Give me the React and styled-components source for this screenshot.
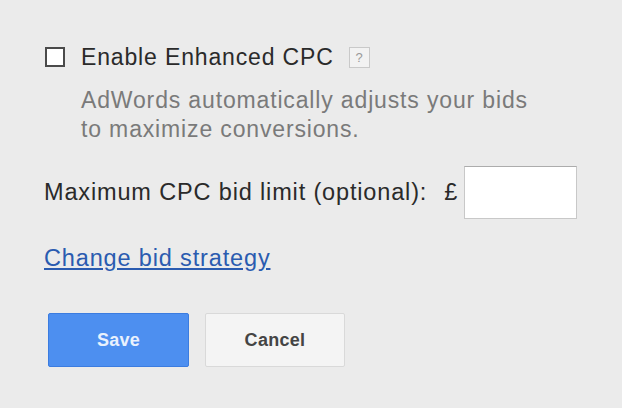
import React from "react";
import styled, { createGlobalStyle } from "styled-components";

const Global = createGlobalStyle`
  html, body { margin: 0; padding: 0; background: #ebebeb; }
  body { font-family: "Liberation Sans", Arial, sans-serif; }
`;

const Panel = styled.div`
  width: 622px;
  height: 408px;
  box-sizing: border-box;
  padding: 44px 0 0 44px;
  background: #ebebeb;
  display: flex;
  flex-direction: column;
  color: #2a2a2a;
  letter-spacing: 0.85px;
`;

const CheckRow = styled.label`
  display: flex;
  align-items: center;
  height: 26px;
`;

const Box = styled.span`
  width: 16px;
  height: 16px;
  border: 2px solid #4a4a4a;
  background: #fff;
  margin-left: 1px;
  margin-right: 16px;
  flex: none;
`;

const Label = styled.span`
  font-size: 23px;
  color: #2a2a2a;
`;

const Help = styled.span`
  margin-left: 15px;
  width: 19px;
  height: 19px;
  border: 1px solid #c9c9c9;
  background: #f2f2f2;
  color: #999;
  font-size: 13px;
  display: flex;
  align-items: center;
  justify-content: center;
  letter-spacing: 0;
`;

const Desc = styled.p`
  margin: 16px 0 0 37px;
  font-size: 23px;
  line-height: 29px;
  color: #7a7a7a;
`;

const BidRow = styled.div`
  display: flex;
  align-items: center;
  margin-top: 22px;
  font-size: 23.5px;
`;

const Field = styled.div`
  display: flex;
  align-items: center;
  margin-left: 17px;
`;

const Pound = styled.span`
  margin-right: 6px;
`;

const Input = styled.input`
  width: 111px;
  height: 51px;
  box-sizing: content-box;
  padding: 0;
  border: 1px solid #c8c8c8;
  border-top-color: #acacac;
  background: #fff;
  outline: none;
`;

const Link = styled.a`
  margin-top: 26px;
  font-size: 23.5px;
  line-height: 27px;
  color: #2a5bb0;
  text-decoration: underline;
  align-self: flex-start;
  cursor: pointer;
`;

const Buttons = styled.div`
  display: flex;
  gap: 16px;
  margin-top: 41px;
  margin-left: 4px;
`;

const Button = styled.button`
  width: ${(p) => (p.$primary ? "141px" : "140px")};
  height: 54px;
  border-radius: 2px;
  font-family: "Liberation Sans", Arial, sans-serif;
  font-weight: bold;
  font-size: 18px;
  letter-spacing: 0.3px;
  border: 1px solid ${(p) => (p.$primary ? "#3b7ce0" : "#d9d9d9")};
  background: ${(p) => (p.$primary ? "#4d8ff0" : "#f4f4f4")};
  color: ${(p) => (p.$primary ? "#e9f1fd" : "#444")};
  cursor: pointer;
`;

export default function App() {
  return (
    <>
      <Global />
      <Panel>
        <CheckRow>
          <Box />
          <Label>Enable Enhanced CPC</Label>
          <Help>?</Help>
        </CheckRow>
        <Desc>
          AdWords automatically adjusts your bids
          <br />
          to maximize conversions.
        </Desc>
        <BidRow>
          <span>Maximum CPC bid limit (optional):</span>
          <Field>
            <Pound>£</Pound>
            <Input type="text" />
          </Field>
        </BidRow>
        <Link>Change bid strategy</Link>
        <Buttons>
          <Button $primary>Save</Button>
          <Button>Cancel</Button>
        </Buttons>
      </Panel>
    </>
  );
}
